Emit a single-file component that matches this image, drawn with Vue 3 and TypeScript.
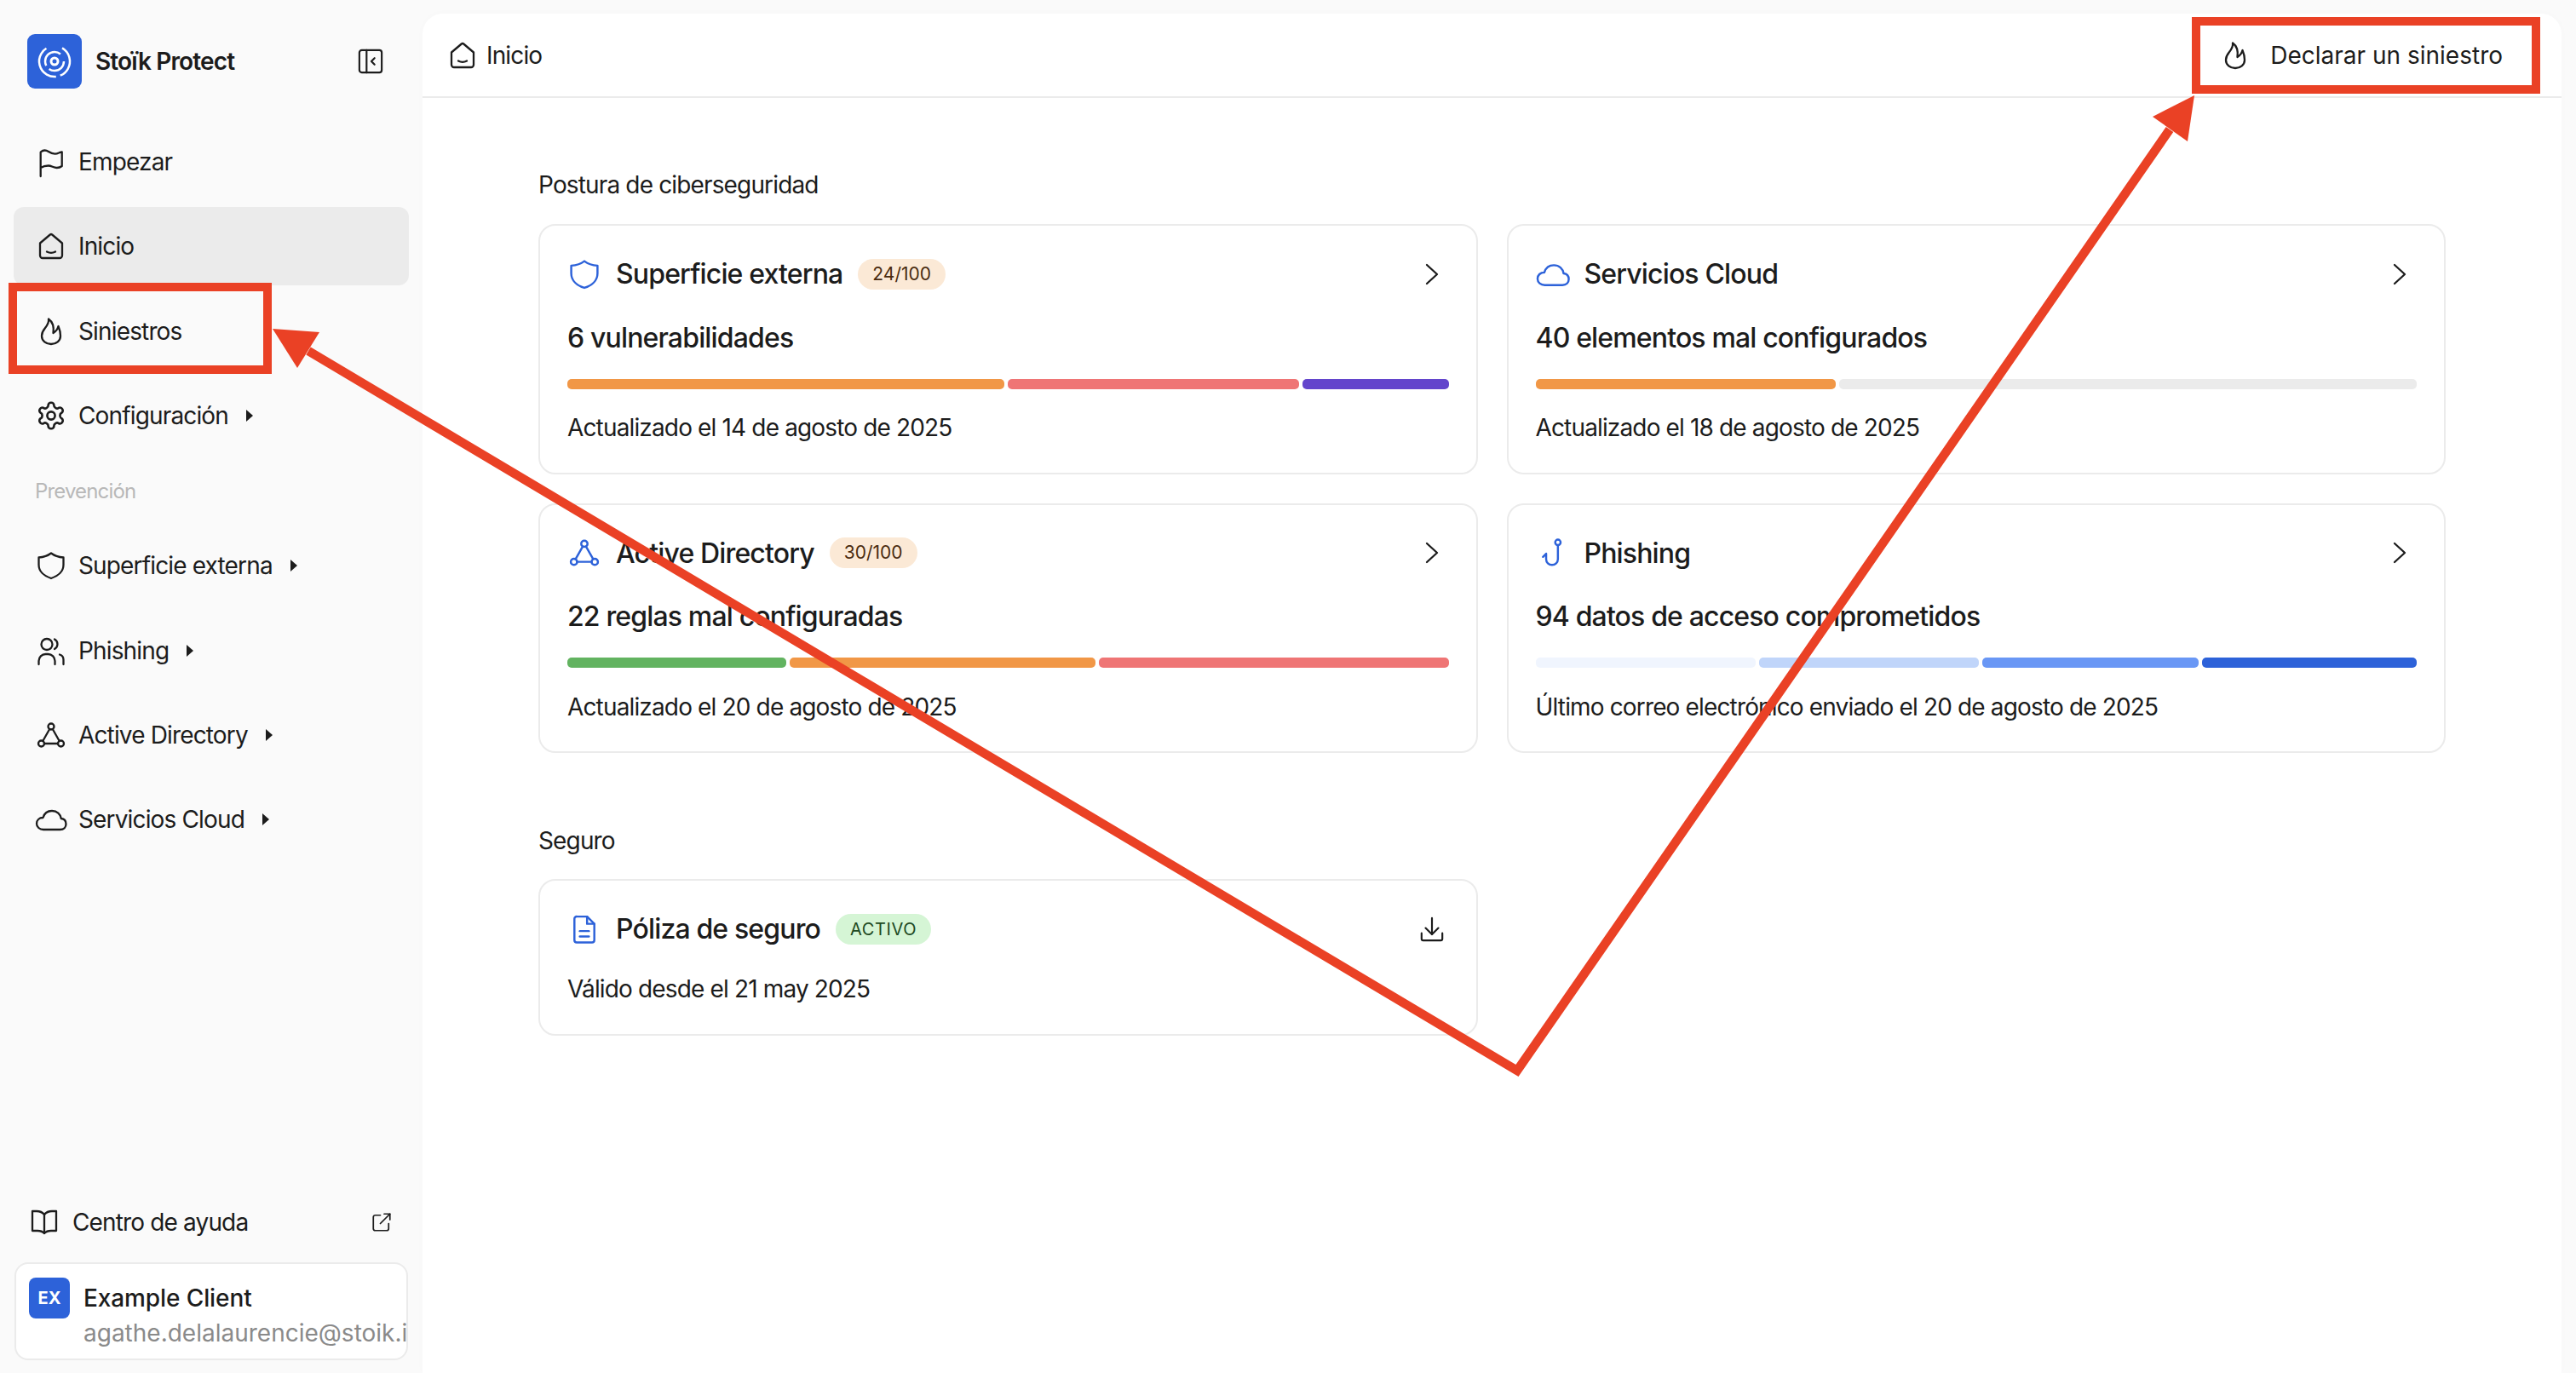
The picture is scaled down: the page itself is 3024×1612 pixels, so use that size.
<script setup lang="ts">
import { h } from 'vue';

// every icon is a list of paths on a 32 box
const icons: Record<string, string[]> = {
  flag: ['M3.7 33V4.5C6.500 2 10 2 13 4s8 3.500 12 1.500c1.500-.8 3.700-1.200 3.700-1.200V21c-2 1.600-4 2-6 2-4 0-6-2.500-10-2.500-4 0-6.500 1-9 2.500'],
  home: ['M3 12.500 14.800 2.500a2 2 0 0 1 2.400 0L29 12.500V27a3 3 0 0 1-3 3H6a3 3 0 0 1-3-3z', 'M11 22.500c3 1.600 7 1.600 10 0'],
  flame: ['M13 1.500c.8 4.500-1.500 7.500-4.300 11C6.200 15.500 5 18 5 21.500 5 27 10 31 16 31s11-4 11-9.500c0-4-1-8-2.500-11.500-.8 3.200-3 6.200-6 8C19.500 11 18 5 13 1.500z'],
  gear: ['M16.290 2.670h-.580a2.670 2.670 0 0 0-2.670 2.670v.240a2.670 2.670 0 0 1-1.330 2.310l-.570.330a2.670 2.670 0 0 1-2.670 0l-.200-.110a2.670 2.670 0 0 0-3.640.970l-.290.510a2.670 2.670 0 0 0 .970 3.640l.200.130a2.670 2.670 0 0 1 1.330 2.290v.680a2.670 2.670 0 0 1-1.330 2.320l-.200.120a2.670 2.670 0 0 0-.970 3.640l.290.510a2.670 2.670 0 0 0 3.640.970l.200-.110a2.670 2.670 0 0 1 2.670 0l.570.330a2.670 2.670 0 0 1 1.330 2.310v.240a2.670 2.670 0 0 0 2.670 2.670h.580a2.670 2.670 0 0 0 2.670-2.670v-.240a2.670 2.670 0 0 1 1.330-2.310l.570-.330a2.670 2.670 0 0 1 2.670 0l.200.110a2.670 2.670 0 0 0 3.640-.970l.290-.520a2.670 2.670 0 0 0-.970-3.640l-.200-.110a2.670 2.670 0 0 1-1.330-2.320v-.660a2.670 2.670 0 0 1 1.330-2.320l.200-.120a2.670 2.670 0 0 0 .970-3.640l-.290-.510a2.670 2.670 0 0 0-3.640-.970l-.200.110a2.670 2.670 0 0 1-2.670 0l-.570-.330a2.670 2.670 0 0 1-1.330-2.310v-.240a2.670 2.670 0 0 0-2.670-2.670z', 'M16 12a4 4 0 1 0 0 8 4 4 0 0 0 0-8z'],
  shield: ['M16 1.500C19.500 4.200 24 6 30.500 6.500V15c0 8-6.500 13.500-14.500 16C8 28.500 1.500 23 1.500 15V6.500C8 6 12.500 4.200 16 1.500z'],
  people: ['M11 2a6.500 6.500 0 1 0 0 13 6.500 6.500 0 0 0 0-13z', 'M20 2.500a6.500 6.500 0 0 1 0 11.500', 'M1.500 32v-4a8 8 0 0 1 8-8h3a8 8 0 0 1 8 8v4', 'M26 20.500c2.800.8 4.500 3.200 4.500 6V32'],
  nodes: ['M16 2.500a3.500 3.500 0 1 0 0 7 3.500 3.500 0 0 0 0-7z', 'M4.500 22.500a3.500 3.500 0 1 0 0 7 3.500 3.500 0 0 0 0-7z', 'M27.500 22.500a3.500 3.500 0 1 0 0 7 3.500 3.500 0 0 0 0-7z', 'M14.200 9 6.300 23', 'M17.800 9l7.900 14', 'M8 26h16'],
  cloud: ['M7 28C2.500 28-1 25-1 21s3-7 7.500-7C8 9 12 6 17 6c6 0 10 4 10.800 9 3.600.4 5.700 3 5.700 6.500S31 28 26.500 28z'],
  hook: ['M21.500 8v15a6.500 6.500 0 0 1-13 0v-6l-3.500 3.500', 'M21.500 1.500a3 3 0 1 0 0 6 3 3 0 0 0 0-6z'],
  doc: ['M8 2h11l8 8v18a2.500 2.500 0 0 1-2.500 2.500h-17A2.500 2.500 0 0 1 5 28V4.500A2.500 2.500 0 0 1 8 2z', 'M19 2v8h8', 'M11 18h10', 'M11 24h10'],
  download: ['M16 2v20', 'M8 14.500l8 8 8-8', 'M3 21v7a2 2 0 0 0 2 2h22a2 2 0 0 0 2-2v-7'],
  chevron: ['M10 5l12 11-12 11'],
  panel: ['M5 2h22a3 3 0 0 1 3 3v22a3 3 0 0 1-3 3H5a3 3 0 0 1-3-3V5a3 3 0 0 1 3-3z', 'M11 2v28', 'M21 12l-4 4 4 4'],
  book: ['M16 7c-2-2.500-5-4-9-4H2v23h6c3.500 0 6 .8 8 3 2-2.200 4.500-3 8-3h6V3h-5c-4 0-7 1.500-9 4z', 'M16 7v22'],
  external: ['M14 5H6a3 3 0 0 0-3 3v18a3 3 0 0 0 3 3h18a3 3 0 0 0 3-3v-8', 'M14 18 29 3', 'M20 3h9v9'],
};

const Icon = (props: { name: string; size?: number }) =>
  h(
    'svg',
    {
      width: props.size ?? 32,
      height: props.size ?? 32,
      viewBox: props.name === 'gear' ? '2 2 28 28' : '0 0 32 32',
      fill: 'none',
      stroke: 'currentColor',
      'stroke-width': 2.3,
      'stroke-linecap': 'round',
      'stroke-linejoin': 'round',
      style: 'flex:none;overflow:visible',
    },
    icons[props.name].map((d) => h('path', { d })),
  );
Icon.props = ['name', 'size'];

const topNav = [
  { label: 'Empezar', icon: 'flag' },
  { label: 'Inicio', icon: 'home', active: true },
  { label: 'Siniestros', icon: 'flame' },
  { label: 'Configuración', icon: 'gear', more: true },
];
const preventionNav = [
  { label: 'Superficie externa', icon: 'shield', more: true },
  { label: 'Phishing', icon: 'people', more: true },
  { label: 'Active Directory', icon: 'nodes', more: true },
  { label: 'Servicios Cloud', icon: 'cloud', more: true },
];

const orange = '#f19746';
const pink = '#ef7575';
const purple = '#6345cc';
const green = '#62b360';

const cards = [
  {
    title: 'Superficie externa',
    icon: 'shield',
    score: '24/100',
    summary: '6 vulnerabilidades',
    date: 'Actualizado el 14 de agosto de 2025',
    bars: [[3, orange], [2, pink], [1, purple]],
  },
  {
    title: 'Servicios Cloud',
    icon: 'cloud',
    summary: '40 elementos mal configurados',
    date: 'Actualizado el 18 de agosto de 2025',
    bars: [[353, orange], [679, '#ebebeb']],
  },
  {
    title: 'Active Directory',
    icon: 'nodes',
    score: '30/100',
    summary: '22 reglas mal configuradas',
    date: 'Actualizado el 20 de agosto de 2025',
    bars: [[5, green], [7, orange], [8, pink]],
  },
  {
    title: 'Phishing',
    icon: 'hook',
    summary: '94 datos de acceso comprometidos',
    date: 'Último correo electrónico enviado el 20 de agosto de 2025',
    bars: [[259, '#f0f5fe'], [258, '#c0d5fa'], [254, '#6997f5'], [252, '#2d62d9']],
  },
] as { title: string; icon: string; score?: string; summary: string; date: string; bars: [number, string][] }[];
</script>

<template>
  <div class="page">
    <aside class="sidebar">
      <div class="brand">
        <div class="logo">
          <svg width="64" height="64" viewBox="0 0 64 64" fill="none" stroke="#fff">
            <circle cx="32" cy="32" r="4" stroke-width="3" />
            <circle cx="32" cy="32" r="11" stroke-width="2.500" stroke-dasharray="24 5 30 10" />
            <circle cx="32" cy="32" r="18" stroke-width="2.500" stroke-dasharray="40 5 48 20" transform="rotate(-60 32 32)" />
          </svg>
        </div>
        <span class="brand-name">Stoïk Protect</span>
        <Icon class="toggle" name="panel" :size="30" />
      </div>

      <nav class="nav">
        <div v-for="item in topNav" :key="item.label" class="nav-row" :class="{ active: item.active }">
          <Icon :name="item.icon" />
          <span>{{ item.label }}</span>
          <i v-if="item.more" class="caret"></i>
        </div>
        <div class="nav-title">Prevención</div>
        <div v-for="item in preventionNav" :key="item.label" class="nav-row">
          <Icon :name="item.icon" />
          <span>{{ item.label }}</span>
          <i v-if="item.more" class="caret"></i>
        </div>
      </nav>

      <div class="footer">
        <div class="help">
          <Icon name="book" />
          <span>Centro de ayuda</span>
          <Icon class="help-link" name="external" :size="24" />
        </div>
        <div class="account">
          <div class="avatar">EX</div>
          <div class="account-text">
            <div class="account-name">Example Client</div>
            <div class="account-mail">agathe.delalaurencie@stoik.io</div>
          </div>
        </div>
      </div>
    </aside>

    <main class="panel">
      <header class="topbar">
        <Icon name="home" />
        <span class="crumb">Inicio</span>
        <button class="declare">
          <Icon name="flame" />
          <span>Declarar un siniestro</span>
        </button>
      </header>

      <div class="content">
        <h2 class="section">Postura de ciberseguridad</h2>
        <div class="grid">
          <section v-for="card in cards" :key="card.title" class="card">
            <div class="card-head">
              <span class="card-icon"><Icon :name="card.icon" :size="34" /></span>
              <span class="card-title">{{ card.title }}</span>
              <span v-if="card.score" class="badge score">{{ card.score }}</span>
              <span class="card-action"><Icon name="chevron" /></span>
            </div>
            <div class="summary">{{ card.summary }}</div>
            <div class="bar">
              <span v-for="(seg, i) in card.bars" :key="i" :style="{ flexGrow: seg[0], background: seg[1] }"></span>
            </div>
            <div class="date">{{ card.date }}</div>
          </section>
        </div>

        <h2 class="section second">Seguro</h2>
        <div class="grid">
          <section class="card policy">
            <div class="card-head">
              <span class="card-icon"><Icon name="doc" :size="34" /></span>
              <span class="card-title">Póliza de seguro</span>
              <span class="badge status">ACTIVO</span>
              <span class="card-action"><Icon name="download" :size="30" /></span>
            </div>
            <div class="date">Válido desde el 21 may 2025</div>
          </section>
        </div>
      </div>
    </main>

    <!-- red annotations drawn over the screenshot -->
    <svg class="marks" width="3024" height="1612" viewBox="0 0 3024 1612" fill="none">
      <rect x="15" y="337" width="299" height="97" stroke="#ea4125" stroke-width="10" />
      <rect x="2578" y="25" width="399" height="80" stroke="#ea4125" stroke-width="10" />
      <polyline points="362,412 1781,1257 2547,152" stroke="#ea4125" stroke-width="10.500" stroke-miterlimit="10" />
      <polygon points="320,386 375,390 349,432" fill="#ea4125" />
      <polygon points="2576,112 2527,137 2568,166" fill="#ea4125" />
    </svg>
  </div>
</template>

<style>
html,
body {
  margin: 0;
  background: #fafafa;
}
</style>

<style scoped>
.page {
  position: relative;
  display: flex;
  width: 3024px;
  height: 1612px;
  overflow: hidden;
  font-family: Inter, "Liberation Sans", sans-serif;
  font-size: 28px;
  letter-spacing: -0.85px;
  color: #1c1c1c;
  background: #fafafa;
}

.sidebar {
  display: flex;
  flex-direction: column;
  flex: none;
  width: 496px;
}
.brand {
  display: flex;
  align-items: center;
  height: 64px;
  margin-top: 40px;
  padding-left: 32px;
}
.logo {
  width: 64px;
  height: 64px;
  border-radius: 9px;
  background: #2d62d9;
}
.logo svg {
  display: block;
}
.brand-name {
  margin-left: 16px;
  font-weight: 600;
}
.toggle {
  margin-left: auto;
  margin-right: 46px;
}
.nav {
  display: flex;
  flex-direction: column;
  gap: 7.25px;
  margin-top: 40px;
}
.nav-row {
  display: flex;
  align-items: center;
  gap: 16px;
  height: 92px;
  margin: 0 16px;
  padding-left: 28px;
  border-radius: 12px;
}
.nav-row.active {
  background: #ebebeb;
}
.caret {
  width: 0;
  height: 0;
  margin-left: 5px;
  border-left: 8px solid #1c1c1c;
  border-top: 7px solid transparent;
  border-bottom: 7px solid transparent;
}
.nav-title {
  height: 68px;
  padding: 2px 0 0 41px;
  line-height: 68px;
  font-size: 24px;
  color: #b8b8b8;
}
.footer {
  margin-top: auto;
  padding-bottom: 15px;
}
.help {
  display: flex;
  align-items: center;
  gap: 17px;
  height: 48px;
  margin-bottom: 23px;
  padding: 0 36px;
}
.help-link {
  margin-left: auto;
  margin-right: 0;
}
.account {
  display: flex;
  gap: 16px;
  box-sizing: border-box;
  height: 115px;
  margin: 0 17px;
  padding: 16px 0 0 15px;
  overflow: hidden;
  border: 2px solid #ebebeb;
  border-radius: 16px;
  background: #fff;
}
.avatar {
  flex: none;
  width: 48px;
  height: 48px;
  border-radius: 8px;
  background: #2d62d9;
  color: #fff;
  font-size: 20px;
  font-weight: 700;
  letter-spacing: 0;
  line-height: 48px;
  text-align: center;
}
.account-text {
  padding-top: 4px;
  line-height: 40px;
  letter-spacing: -0.1px;
  white-space: nowrap;
}
.account-name {
  font-weight: 500;
}
.account-mail {
  margin-top: 1px;
  letter-spacing: 0;
  color: #8a8a8a;
}

.panel {
  flex: 1;
  min-width: 0;
  margin: 16px 17px 0 0;
  border-radius: 24px 24px 0 0;
  background: #fff;
  box-shadow: 0 0 12px rgba(0, 0, 0, 0.015);
}
.topbar {
  display: flex;
  align-items: center;
  box-sizing: border-box;
  height: 99px;
  padding: 0 69px 0 31px;
  border-bottom: 2px solid #ebebeb;
}
.crumb {
  margin-left: 12px;
}
.declare {
  display: flex;
  align-items: center;
  gap: 25px;
  margin-left: auto;
  padding: 0;
  border: 0;
  background: none;
  color: inherit;
  font: inherit;
  letter-spacing: 0;
}
.content {
  padding: 82px 136px 0;
}
.section {
  margin: 0 0 26px;
  font-size: 28px;
  font-weight: 400;
  line-height: 40px;
}
.section.second {
  margin: 83px 0 25px;
}
.grid {
  display: grid;
  grid-template-columns: 1fr 1fr;
  gap: 34px;
}
.card {
  box-sizing: border-box;
  height: 293.5px;
  padding: 36.5px 32px 0;
  border: 2px solid #ebebeb;
  border-radius: 20px;
}
.card.policy {
  height: 184px;
}
.card-head {
  display: flex;
  align-items: center;
  height: 40px;
}
.card-icon {
  display: flex;
  flex: none;
  justify-content: center;
  width: 40px;
  margin-right: 17px;
  color: #2d62d9;
}
.card-title {
  font-size: 32px;
  font-weight: 500;
}
.badge {
  margin-left: 18px;
  padding: 0 17px;
  border-radius: 18px;
  font-size: 21px;
  letter-spacing: 0;
  line-height: 36px;
}
.badge.score {
  background: #fbe9d6;
  color: #4a2c10;
}
.badge.status {
  background: #d5f5d5;
  font-size: 20px;
  color: #20491f;
  letter-spacing: 0.6px;
}
.card-action {
  display: flex;
  justify-content: center;
  width: 40px;
  margin-left: auto;
}
.summary {
  margin-top: 35px;
  font-size: 32px;
  font-weight: 500;
  line-height: 40px;
}
.bar {
  display: flex;
  gap: 4px;
  height: 12px;
  margin-top: 28px;
}
.bar span {
  flex-basis: 0;
  border-radius: 5px;
}
.date {
  margin-top: 25.5px;
  line-height: 40px;
}
.policy .date {
  margin-top: 30px;
}
.marks {
  position: absolute;
  top: 0;
  left: 0;
  pointer-events: none;
}
</style>
